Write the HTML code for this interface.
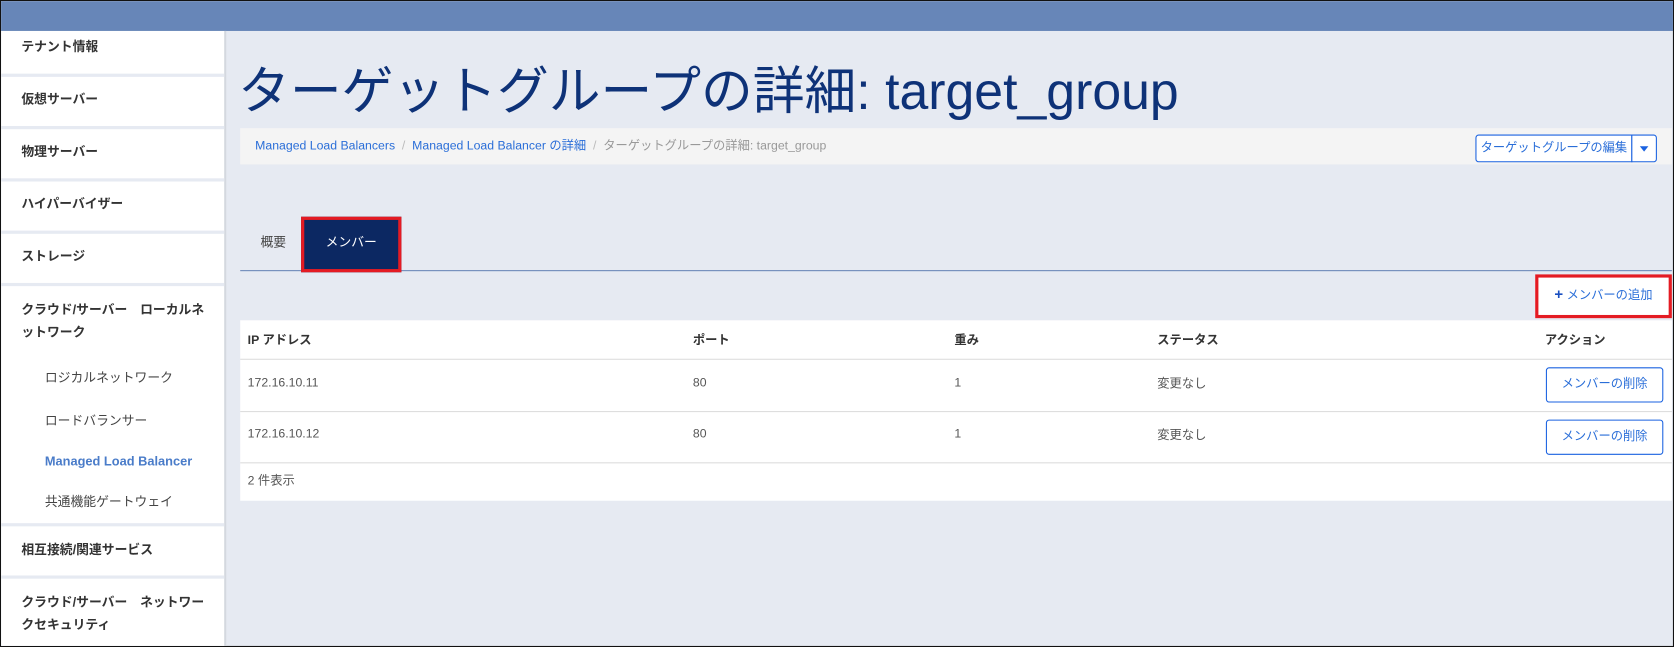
<!DOCTYPE html>
<html><head><meta charset="utf-8"><style>
html,body{margin:0;padding:0;overflow:hidden;background:#e6eaf2}
#w{position:absolute;left:0;top:0;width:1568px;height:606px;transform:scale(1.06760,1.06766);transform-origin:0 0;background:#e6eaf2;font-family:"Liberation Sans","Noto Sans CJK JP",sans-serif;box-sizing:border-box;border:1px solid #111;overflow:hidden}
.a{position:absolute;white-space:nowrap}
#top{left:0;top:0;width:1568px;height:28px;background:#6786b8}
#side{left:0;top:28px;width:209px;height:578px;background:#fff;border-right:2px solid #d4d8df}
.sep{position:absolute;left:0;width:209px;height:3px;background:#e6eaf2}
.si{position:absolute;left:19px;font-size:12px;font-weight:bold;color:#333}
.sub{position:absolute;left:41px;font-size:12px;color:#444}
.btn{position:absolute;box-sizing:border-box;border:1px solid #1a62e0;border-radius:3px;background:#fff;color:#2a6ed8;font-size:11.5px;text-align:center}
.th{position:absolute;font-size:11.5px;font-weight:bold;color:#333}
.td{position:absolute;font-size:11.5px;color:#555}
.hl{position:absolute;left:224px;width:1341px;height:1px;background:#dcdcdc}
</style></head><body><div id="w">
<div class="a" id="top"></div>
<div class="a" id="side">
<div class="si" style="top:6px">テナント情報</div>
<div class="sep" style="top:40px"></div>
<div class="si" style="top:55px">仮想サーバー</div>
<div class="sep" style="top:89px"></div>
<div class="si" style="top:104px">物理サーバー</div>
<div class="sep" style="top:138px"></div>
<div class="si" style="top:153px">ハイパーバイザー</div>
<div class="sep" style="top:187px"></div>
<div class="si" style="top:202px">ストレージ</div>
<div class="sep" style="top:236px"></div>
<div class="si" style="top:251px;line-height:21px;width:180px;white-space:normal">クラウド/サーバー　ローカルネットワーク</div>
<div class="sub" style="top:316px">ロジカルネットワーク</div>
<div class="sub" style="top:356px">ロードバランサー</div>
<div class="sub" style="top:396px;color:#4a7cc9;font-weight:bold">Managed Load Balancer</div>
<div class="sub" style="top:432px">共通機能ゲートウェイ</div>
<div class="sep" style="top:461px"></div>
<div class="si" style="top:477px">相互接続/関連サービス</div>
<div class="sep" style="top:510px"></div>
<div class="si" style="top:525px;line-height:21px;width:180px;white-space:normal">クラウド/サーバー　ネットワークセキュリティ</div>
</div>
<div class="a" style="left:222px;top:45px;font-size:48.5px;color:#0e3278">ターゲットグループの詳細: target_group</div>
<div class="a" style="left:224px;top:119px;width:1341px;height:34px;background:#f4f4f4"></div>
<div class="a" style="left:238px;top:127px;font-size:11.5px;color:#2a6ed8">Managed Load Balancers <span style="color:#bbb">&nbsp;/&nbsp;</span> Managed Load Balancer の詳細 <span style="color:#bbb">&nbsp;/&nbsp;</span> <span style="color:#999">ターゲットグループの詳細: target_group</span></div>
<div class="btn" style="left:1381px;top:125px;width:147px;height:26px;line-height:24px;border-radius:3px 0 0 3px">ターゲットグループの編集</div>
<div class="btn" style="left:1527px;top:125px;width:24px;height:26px;border-radius:0 3px 3px 0"><div style="position:absolute;left:7px;top:10px;border-left:4px solid transparent;border-right:4px solid transparent;border-top:5px solid #1a62e0"></div></div>
<div class="a" style="left:224px;top:252px;width:1341px;height:1px;background:#6a86b8"></div>
<div class="a" style="left:243px;top:217px;font-size:12px;color:#444">概要</div>
<div class="a" style="left:281px;top:202px;width:88px;height:46px;border:3px solid #e41b23;background:#0c2862"></div>
<div class="a" style="left:304px;top:217px;font-size:12px;color:#fff">メンバー</div>
<div class="a" style="left:1437px;top:256px;width:122px;height:35px;border:3px solid #e41b23;background:#fff"></div>
<div class="a" style="left:1455px;top:266px;font-size:11.5px;color:#2a6ed8"><b style="color:#1a4fc0;font-size:14px">+</b> メンバーの追加</div>
<div class="a" style="left:224px;top:299px;width:1341px;height:169px;background:#fff"></div>
<div class="th" style="left:231px;top:309px">IP アドレス</div>
<div class="th" style="left:648px;top:309px">ポート</div>
<div class="th" style="left:893px;top:309px">重み</div>
<div class="th" style="left:1083px;top:309px">ステータス</div>
<div class="th" style="left:1446px;top:309px">アクション</div>
<div class="hl" style="top:335px"></div>
<div class="td" style="left:231px;top:352px">172.16.10.11</div>
<div class="td" style="left:648px;top:352px">80</div>
<div class="td" style="left:893px;top:352px">1</div>
<div class="td" style="left:1083px;top:350px">変更なし</div>
<div class="btn" style="left:1447px;top:343px;width:110px;height:33px;line-height:31px">メンバーの削除</div>
<div class="hl" style="top:384px"></div>
<div class="td" style="left:231px;top:400px">172.16.10.12</div>
<div class="td" style="left:648px;top:400px">80</div>
<div class="td" style="left:893px;top:400px">1</div>
<div class="td" style="left:1083px;top:398px">変更なし</div>
<div class="btn" style="left:1447px;top:392px;width:110px;height:33px;line-height:31px">メンバーの削除</div>
<div class="hl" style="top:432px"></div>
<div class="td" style="left:231px;top:441px">2 件表示</div>
</div></body></html>
